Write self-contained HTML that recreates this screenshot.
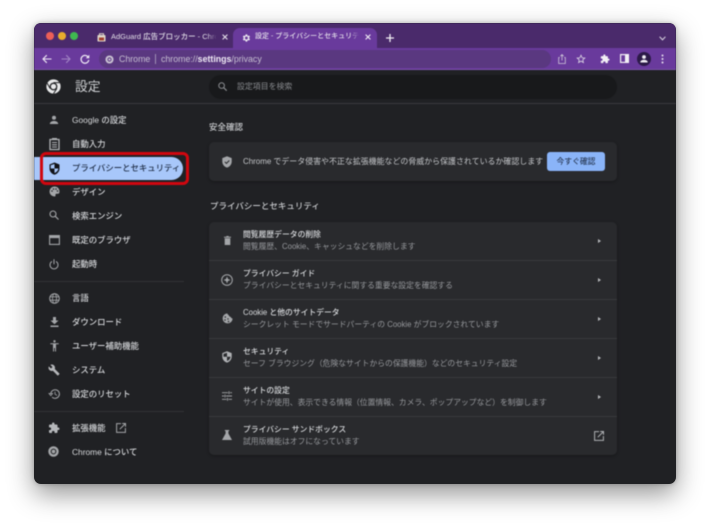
<!DOCTYPE html>
<html lang="ja"><head><meta charset="utf-8"><style>
html,body{margin:0;padding:0;width:710px;height:528px;overflow:hidden;background:#fff}
body{font-family:"Liberation Sans","Noto Sans CJK JP",sans-serif;position:relative}
.a{position:absolute;white-space:nowrap}
#win{position:absolute;left:34px;top:23px;width:642px;height:461px;border-radius:7px;overflow:hidden;background:#202124;box-shadow:0 10px 26px rgba(0,0,0,.42),0 0 5px rgba(0,0,0,.25)}
#wrap{position:absolute;left:-34px;top:-23px;width:710px;height:528px;filter:blur(.4px)}
.nav{color:#d4d6d9;font-size:8.4px;left:72px;line-height:12px;font-weight:500}
.h{color:#d8dadd;font-size:7.8px;left:243px;line-height:12px;font-weight:500}
.s{color:#96989c;font-size:7.8px;left:243px;line-height:12px}
.ic{position:absolute;overflow:visible}
.line{position:absolute;left:209px;width:408px;height:1px;background:#38393c}
.chev{position:absolute;left:598px;width:0;height:0;border-left:3px solid #b5b7ba;border-top:2.5px solid transparent;border-bottom:2.5px solid transparent}
</style></head><body>
<div id="win"><div id="wrap">
<div class="a" style="left:34px;top:23px;width:642px;height:25px;background:#4a2a6b"></div>
<div class="a" style="left:34px;top:48px;width:642px;height:22px;background:#693a9c"></div>
<div class="a" style="left:34px;top:69px;width:642px;height:1px;background:#7b53a8"></div>
<div class="a" style="left:233px;top:28px;width:144px;height:22px;background:#693a9c;border-radius:7px 7px 0 0"></div>

<div class="a" style="left:46px;top:32px;width:8px;height:8px;border-radius:50%;background:#ec5f57"></div>
<div class="a" style="left:58px;top:32px;width:8px;height:8px;border-radius:50%;background:#e7ad2d"></div>
<div class="a" style="left:69.500px;top:32px;width:8px;height:8px;border-radius:50%;background:#3fb950"></div>

<svg class="ic" style="left:97px;top:33px" width="9" height="9" viewBox="0 0 9 9"><rect x=".5" y="2" width="8" height="6.500" rx=".8" fill="#ded6c8"/><rect x="2" y="4.500" width="5" height="3" fill="#a33f2e"/><path d="M2.500 2V.8h4V2" stroke="#ded6c8" fill="none"/></svg>
<div class="a" style="left:111px;top:31px;font-size:7.500px;line-height:12px;color:#e0dce6;width:105px;overflow:hidden;font-weight:500">AdGuard 広告ブロッカー - Chrome</div>
<div class="a" style="left:207px;top:30px;width:14px;height:14px;background:linear-gradient(90deg,rgba(74,42,107,0),#4a2a6b 70%)"></div>
<svg class="ic" style="left:222px;top:34px" width="6" height="6" viewBox="0 0 6 6"><path d="M.6.6l4.800 4.800M5.400.6L.6 5.400" stroke="#e5e0ea" stroke-width="1.100"/></svg>

<svg class="ic" style="left:241px;top:33px" width="10" height="10" viewBox="0 0 24 24"><path fill="#ece8f0" d="M19.400 13c.1-.3.100-.7.100-1s0-.7-.1-1l2.100-1.600-2-3.500-2.500 1c-.5-.4-1.100-.7-1.700-1L15 3.300h-4l-.4 2.600c-.6.300-1.200.6-1.700 1l-2.500-1-2 3.500L6.500 11c-.1.300-.1.700-.1 1s0 .7.100 1l-2.100 1.600 2 3.500 2.500-1c.5.400 1.100.7 1.700 1l.4 2.600h4l.4-2.600c.6-.3 1.200-.6 1.700-1l2.500 1 2-3.500zM13 15.500A3.500 3.500 0 1 1 13 8.500a3.500 3.500 0 0 1 0 7z"/></svg>
<div class="a" style="left:255px;top:31px;font-size:7px;line-height:12px;color:#e4dfea;width:105px;overflow:hidden;font-weight:500">設定 - プライバシーとセキュリティ</div>
<div class="a" style="left:350px;top:30px;width:12px;height:14px;background:linear-gradient(90deg,rgba(105,58,156,0),#693a9c 75%)"></div>
<svg class="ic" style="left:365px;top:34px" width="6" height="6" viewBox="0 0 6 6"><path d="M.6.6l4.800 4.800M5.400.6L.6 5.400" stroke="#f0ecf4" stroke-width="1.100"/></svg>
<svg class="ic" style="left:386px;top:34px" width="8" height="8" viewBox="0 0 8 8"><path d="M4 0v8M0 4h8" stroke="#f2eff5" stroke-width="1.300"/></svg>
<svg class="ic" style="left:659px;top:36px" width="7" height="5" viewBox="0 0 7 5"><path d="M.6.8L3.500 3.800 6.400.8" stroke="#d0c8da" stroke-width="1.100" fill="none"/></svg>

<svg class="ic" style="left:42px;top:54px" width="10" height="10" viewBox="0 0 10 10"><path d="M9.500 5H1.200M4.800 1.200L1 5l3.800 3.800" stroke="#efe9f5" stroke-width="1.100" fill="none"/></svg>
<svg class="ic" style="left:61px;top:54px" width="10" height="10" viewBox="0 0 10 10"><path d="M.5 5h8.300M5.200 1.200L9 5 5.200 8.800" stroke="#a184c4" stroke-width="1.100" fill="none"/></svg>
<svg class="ic" style="left:80px;top:53.500px" width="10" height="10" viewBox="0 0 10 10"><path d="M8.300 3.300A3.900 3.900 0 1 0 8.800 6" stroke="#f0ebf5" stroke-width="1.200" fill="none"/><path d="M9.300 .8v3.500H5.800z" fill="#f0ebf5"/></svg>

<div class="a" style="left:99px;top:50px;width:452px;height:17.500px;border-radius:9px;background:#5a3880"></div>
<svg class="ic" style="left:105px;top:54.500px" width="9" height="9" viewBox="0 0 10 10"><circle cx="5" cy="5" r="4.500" fill="#c9c2d2"/><circle cx="5" cy="5" r="2.300" fill="#5a3880"/><circle cx="5" cy="5" r="1.300" fill="#c9c2d2"/></svg>
<div class="a" style="left:119px;top:53px;font-size:8.800px;line-height:12px;color:#c5bed0">Chrome</div>
<div class="a" style="left:154.500px;top:54px;width:1px;height:10px;background:#a08fb5"></div>
<div class="a" style="left:161px;top:53px;font-size:8.800px;line-height:12px;color:#c5bed0">chrome://<b style="color:#efeaf4;font-weight:700">settings</b>/privacy</div>
<svg class="ic" style="left:558px;top:54px" width="8" height="10" viewBox="0 0 8 10"><path d="M1.800 3.500H.7v6h6.600v-6H6.200M4 6.500V.8M2.400 2.200L4 .6l1.600 1.600" stroke="#cfc8d9" stroke-width=".8" fill="none"/></svg>
<svg class="ic" style="left:576px;top:53.500px" width="10" height="10" viewBox="0 0 24 24"><path d="M12 3l2.700 6 6.500.7-4.900 4.300 1.400 6.400L12 17.100l-5.700 3.300 1.400-6.400L2.800 9.700 9.300 9z" stroke="#dcd6e4" stroke-width="2" fill="none"/></svg>
<svg class="ic" style="left:600px;top:53.500px" width="10" height="10" viewBox="0 0 24 24"><path fill="#f2eff5" d="M20.500 11H19V7c0-1.100-.9-2-2-2h-4V3.500a2.500 2.500 0 0 0-5 0V5H4c-1.100 0-2 .9-2 2v3.800h1.500a2.700 2.700 0 0 1 0 5.400H2V20c0 1.100.9 2 2 2h3.800v-1.500a2.700 2.700 0 0 1 5.400 0V22H17c1.100 0 2-.9 2-2v-4h1.500a2.500 2.500 0 0 0 0-5z"/></svg>
<svg class="ic" style="left:620px;top:54px" width="9" height="9" viewBox="0 0 9 9"><rect x=".6" y=".6" width="7.800" height="7.800" fill="none" stroke="#f2eff5" stroke-width="1.200"/><rect x="5" y=".6" width="3.400" height="7.800" fill="#f2eff5"/></svg>
<div class="a" style="left:637px;top:52px;width:14px;height:14px;border-radius:50%;background:#2c1a48"></div>
<svg class="ic" style="left:640px;top:55px" width="8" height="8" viewBox="0 0 8 8"><circle cx="4" cy="2" r="1.900" fill="#f2eff5"/><path d="M.3 7.500c0-2 2-2.700 3.700-2.700s3.700.7 3.700 2.700z" fill="#f2eff5"/></svg>
<svg class="ic" style="left:661px;top:54px" width="3" height="10" viewBox="0 0 3 10"><circle cx="1.500" cy="1.500" r="1" fill="#e6e0ee"/><circle cx="1.500" cy="5" r="1" fill="#e6e0ee"/><circle cx="1.500" cy="8.500" r="1" fill="#e6e0ee"/></svg>

<div class="a" style="left:34px;top:103px;width:642px;height:1px;background:#3a3b3e"></div>
<svg class="ic" style="left:46px;top:79px" width="15" height="15" viewBox="0 0 20 20"><circle cx="10" cy="10" r="9.500" fill="#e8e9ea"/><circle cx="10" cy="10" r="5.200" fill="#202124"/><circle cx="10" cy="10" r="3.500" fill="#e8e9ea"/><path d="M10 4.800h8.500M5.500 12.600L1.500 5.500M14.500 12.600L10 19.500" stroke="#202124" stroke-width="1.300"/></svg>
<div class="a" style="left:75px;top:78px;font-size:12.800px;line-height:17px;color:#cfd1d4">設定</div>
<div class="a" style="left:209px;top:75px;width:408px;height:23.500px;border-radius:12px;background:#18191b"></div>
<svg class="ic" style="left:218px;top:82px" width="9" height="9" viewBox="0 0 9 9"><circle cx="3.600" cy="3.600" r="2.800" stroke="#8b8d91" stroke-width="1" fill="none"/><path d="M5.700 5.700L8.700 8.700" stroke="#8b8d91" stroke-width="1.100"/></svg>
<div class="a" style="left:237px;top:81px;font-size:7.900px;line-height:12px;color:#86888c">設定項目を検索</div>

<!-- sidebar -->
<div class="a" style="left:34px;top:157px;width:149px;height:23px;background:#a8c7fa;border-radius:0 12px 12px 0"></div>
<div class="a" style="left:40px;top:152px;width:143px;height:26.500px;border:3px solid #d0070f;border-radius:6px"></div>

<svg class="ic" style="left:49px;top:115px" width="10" height="10" viewBox="0 0 10 10"><circle cx="5" cy="2.700" r="2" fill="#a4a6a9"/><path d="M.8 9c0-2.200 2.400-3 4.200-3s4.200.8 4.200 3z" fill="#a4a6a9"/></svg>
<div class="a nav" style="top:114px">Google の設定</div>
<svg class="ic" style="left:49px;top:138px" width="11" height="12" viewBox="0 0 11 12"><path d="M1 1.500h9v10H1z" fill="none" stroke="#b0b2b5" stroke-width="1.300"/><path d="M3 .5h5M3 4.500h5M3 6.800h5M3 9h5" stroke="#b0b2b5" stroke-width="1.100"/></svg>
<div class="a nav" style="top:138px">自動入力</div>
<svg class="ic" style="left:49px;top:162px" width="11" height="13" viewBox="0 0 11 13"><path d="M5.500.5l5 2v4c0 3-2.200 5.400-5 6.300C2.700 11.900.5 9.500.5 6.500v-4z" fill="#111318"/><path d="M5.500 2v4.500H9.300c-.2 2-1.700 3.800-3.800 4.500V6.500H1.700V3.300z" fill="#a8c7fa"/></svg>
<div class="a nav" style="top:162px;color:#22314a">プライバシーとセキュリティ</div>
<svg class="ic" style="left:49px;top:186px" width="11" height="11" viewBox="0 0 11 11"><path d="M5.500.5a5 5 0 0 0 0 10c.9 0 1.200-.6 1-1.200-.3-.8.200-1.500 1-1.500h1.300c1.100 0 1.700-.9 1.700-2.200C10.500 2.500 8.300.5 5.500.5z" fill="#a4a6a9"/><circle cx="3" cy="5" r=".8" fill="#202124"/><circle cx="4.500" cy="3" r=".8" fill="#202124"/><circle cx="7" cy="3" r=".8" fill="#202124"/><circle cx="8.500" cy="5" r=".8" fill="#202124"/></svg>
<div class="a nav" style="top:186px">デザイン</div>
<svg class="ic" style="left:49px;top:210px" width="10" height="10" viewBox="0 0 10 10"><circle cx="4" cy="4" r="3" stroke="#a4a6a9" stroke-width="1.100" fill="none"/><path d="M6.300 6.300L9.500 9.500" stroke="#a4a6a9" stroke-width="1.200"/></svg>
<div class="a nav" style="top:210px">検索エンジン</div>
<svg class="ic" style="left:49px;top:235px" width="11" height="10" viewBox="0 0 11 10"><rect x=".6" y=".6" width="9.800" height="8.800" fill="none" stroke="#a4a6a9" stroke-width="1.100"/><rect x=".6" y=".6" width="9.800" height="2.500" fill="#a4a6a9"/></svg>
<div class="a nav" style="top:234px">既定のブラウザ</div>
<svg class="ic" style="left:49px;top:259px" width="10" height="11" viewBox="0 0 10 11"><path d="M3 2.400a4 4 0 1 0 4 0M5 .3v5" stroke="#a4a6a9" stroke-width="1" fill="none"/></svg>
<div class="a nav" style="top:258px">起動時</div>
<div class="a" style="left:34px;top:281px;width:150px;height:1px;background:#323336"></div>

<svg class="ic" style="left:49px;top:293px" width="11" height="11" viewBox="0 0 11 11"><circle cx="5.500" cy="5.500" r="4.800" stroke="#a4a6a9" fill="none"/><ellipse cx="5.500" cy="5.500" rx="2" ry="4.800" stroke="#a4a6a9" stroke-width=".8" fill="none"/><path d="M.8 3.800h9.400M.8 7.200h9.400" stroke="#a4a6a9" stroke-width=".8"/></svg>
<div class="a nav" style="top:292px">言語</div>
<svg class="ic" style="left:50px;top:317px" width="9" height="10" viewBox="0 0 9 10"><path d="M3 0h3v3.500h2.500L4.500 7.300.5 3.500H3zM.5 8.500h8V10h-8z" fill="#a4a6a9"/></svg>
<div class="a nav" style="top:316px">ダウンロード</div>
<svg class="ic" style="left:50px;top:340px" width="9" height="12" viewBox="0 0 9 12"><circle cx="4.500" cy="1.300" r="1.200" fill="#a4a6a9"/><path d="M.3 3.300h8.400v1H6V11.500H5V8H4v3.500H3V4.300H.3z" fill="#a4a6a9"/></svg>
<div class="a nav" style="top:340px">ユーザー補助機能</div>
<svg class="ic" style="left:48px;top:364px" width="12" height="12" viewBox="0 0 24 24"><path fill="#b5b7ba" d="M22.700 19l-9.100-9.100c.9-2.300.4-5-1.500-6.900-2-2-5-2.400-7.400-1.300L9 6 6 9 1.600 4.700C.4 7.100.9 10.100 2.900 12.100c1.900 1.900 4.600 2.400 6.900 1.500l9.100 9.100c.4.400 1 .4 1.400 0l2.300-2.300c.5-.4.500-1.100.1-1.400z"/></svg>
<div class="a nav" style="top:364px">システム</div>
<svg class="ic" style="left:49px;top:389px" width="11" height="10" viewBox="0 0 11 10"><path d="M1.800 5a4.300 4.300 0 1 1 1.300 3.100" stroke="#a4a6a9" fill="none"/><path d="M0 4.500h3.600L1.800 6.600zM6 2.600v2.600l2 1.200" fill="none" stroke="#a4a6a9" stroke-width=".8"/></svg>
<div class="a nav" style="top:388px">設定のリセット</div>
<div class="a" style="left:34px;top:411px;width:150px;height:1px;background:#323336"></div>

<svg class="ic" style="left:48px;top:422px" width="12" height="12" viewBox="0 0 24 24"><path fill="#b5b7ba" d="M20.500 11H19V7c0-1.100-.9-2-2-2h-4V3.500a2.500 2.500 0 0 0-5 0V5H4c-1.100 0-2 .9-2 2v3.800h1.500a2.700 2.700 0 0 1 0 5.400H2V20c0 1.100.9 2 2 2h3.800v-1.500a2.700 2.700 0 0 1 5.400 0V22H17c1.100 0 2-.9 2-2v-4h1.500a2.500 2.500 0 0 0 0-5z"/></svg>
<div class="a nav" style="top:422px">拡張機能</div>
<svg class="ic" style="left:116px;top:423px" width="10" height="10" viewBox="0 0 10 10"><path d="M5 .6H.6v8.800h8.800V5M3.800 6.200L9.400.6M6.200.5h3.300v3.300" stroke="#a4a6a9" fill="none"/></svg>
<svg class="ic" style="left:48px;top:446px" width="11" height="11" viewBox="0 0 20 20"><circle cx="10" cy="10" r="9.500" fill="#a4a6a9"/><circle cx="10" cy="10" r="5.200" fill="#202124"/><circle cx="10" cy="10" r="3.300" fill="#a4a6a9"/></svg>
<div class="a nav" style="top:446px">Chrome について</div>

<!-- safety -->
<div class="a" style="left:209px;top:121px;font-size:8.500px;line-height:12px;color:#c9cbce;font-weight:500">安全確認</div>
<div class="a" style="left:209px;top:142px;width:408px;height:39px;border-radius:5px;background:#292a2d;box-shadow:0 1px 3px rgba(0,0,0,.3)"></div>
<svg class="ic" style="left:222px;top:156px" width="10" height="12" viewBox="0 0 10 12"><path d="M5 .3l4.700 1.800v3.500c0 2.900-2 5.100-4.700 6C2.300 10.700.3 8.500.3 5.600V2.100z" fill="#a4a6a9"/><path d="M2.800 5.800l1.600 1.600 2.900-2.900" stroke="#292a2d" fill="none"/></svg>
<div class="a" style="left:243px;top:155.500px;font-size:7.950px;line-height:12px;color:#c3c5c8">Chrome でデータ侵害や不正な拡張機能などの脅威から保護されているか確認します</div>
<div class="a" style="left:547px;top:152px;width:58px;height:19px;border-radius:3px;background:#8ab4f8;font-size:7.800px;line-height:19px;text-align:center;color:#2a3b58;font-weight:500">今すぐ確認</div>

<div class="a" style="left:210px;top:199.500px;font-size:8.500px;line-height:12px;color:#c9cbce;font-weight:500">プライバシーとセキュリティ</div>
<div class="a" style="left:209px;top:222px;width:408px;height:233px;border-radius:5px;background:#292a2d;box-shadow:0 1px 3px rgba(0,0,0,.3)"></div>
<div class="line" style="top:260px"></div><div class="line" style="top:299px"></div><div class="line" style="top:338px"></div><div class="line" style="top:377px"></div><div class="line" style="top:416px"></div>

<svg class="ic" style="left:224px;top:236px" width="7" height="9" viewBox="0 0 7 9"><path d="M0 .8h7v1H0zM.7 2.300h5.600V9H.7zM2.300 0h2.400v.8H2.300z" fill="#a4a6a9"/></svg>
<div class="a h" style="top:228.500px">閲覧履歴データの削除</div>
<div class="a s" style="top:240.500px">閲覧履歴、Cookie、キャッシュなどを削除します</div>
<div class="chev" style="top:238.500px"></div>

<svg class="ic" style="left:221px;top:274px" width="12" height="12" viewBox="0 0 12 12"><circle cx="6" cy="6" r="5.300" stroke="#a4a6a9" fill="none"/><path d="M6 2.500L7 5l2.500 1L7 7 6 9.500 5 7 2.500 6 5 5z" fill="#a4a6a9"/></svg>
<div class="a h" style="top:267.500px">プライバシー ガイド</div>
<div class="a s" style="top:279.500px">プライバシーとセキュリティに関する重要な設定を確認する</div>
<div class="chev" style="top:277.500px"></div>

<svg class="ic" style="left:222px;top:313px" width="11" height="11" viewBox="0 0 11 11"><path d="M5.300.4a5 5 0 1 0 5.300 5.100C9.800 5.400 9 5 8.800 4 7.700 3.800 6.800 3 6.700 2 5.900 1.800 5.400 1.200 5.300.4z" fill="#a4a6a9"/><circle cx="3.300" cy="4" r=".8" fill="#292a2d"/><circle cx="3" cy="7" r=".8" fill="#292a2d"/><circle cx="6" cy="6" r=".7" fill="#292a2d"/><circle cx="6.500" cy="8.500" r=".8" fill="#292a2d"/></svg>
<div class="a h" style="top:306.500px">Cookie と他のサイトデータ</div>
<div class="a s" style="top:318.500px">シークレット モードでサードパーティの Cookie がブロックされています</div>
<div class="chev" style="top:316.500px"></div>

<svg class="ic" style="left:222px;top:351px" width="10" height="12" viewBox="0 0 10 12"><path d="M5 .3l4.700 1.800v3.500c0 2.900-2 5.100-4.700 6C2.300 10.700.3 8.500.3 5.600V2.100z" fill="#b0b2b5"/><path d="M5 1.800v4H8.500c-.2 2-1.500 3.500-3.500 4.200V5.800H1.500V3z" fill="#292a2d"/></svg>
<div class="a h" style="top:345.500px">セキュリティ</div>
<div class="a s" style="top:357.500px">セーフ ブラウジング（危険なサイトからの保護機能）などのセキュリティ設定</div>
<div class="chev" style="top:355.500px"></div>

<svg class="ic" style="left:222px;top:391px" width="10" height="10" viewBox="0 0 10 10"><path d="M0 1.700h6M8 1.700h2M0 5h2M4 5h6M0 8.300h4.500M6.500 8.300H10M7 .3v2.800M3 3.600v2.800M5.500 6.900v2.800" stroke="#a4a6a9" stroke-width=".9"/></svg>
<div class="a h" style="top:384.500px">サイトの設定</div>
<div class="a s" style="top:396.500px">サイトが使用、表示できる情報（位置情報、カメラ、ポップアップなど）を制御します</div>
<div class="chev" style="top:394.500px"></div>

<svg class="ic" style="left:222px;top:430px" width="10" height="10" viewBox="0 0 10 10"><path d="M2.800 0h4.400v1H6.400v2.500L10 10H0l3.600-6.500V1H2.800z" fill="#a4a6a9"/></svg>
<div class="a h" style="top:423.500px">プライバシー サンドボックス</div>
<div class="a s" style="top:435.500px">試用版機能はオフになっています</div>
<svg class="ic" style="left:594px;top:431px" width="10" height="10" viewBox="0 0 10 10"><path d="M5 .6H.6v8.800h8.800V5M3.800 6.200L9.400.6M6.200.5h3.300v3.300" stroke="#b0b2b5" fill="none"/></svg>
</div></div>
</body></html>
